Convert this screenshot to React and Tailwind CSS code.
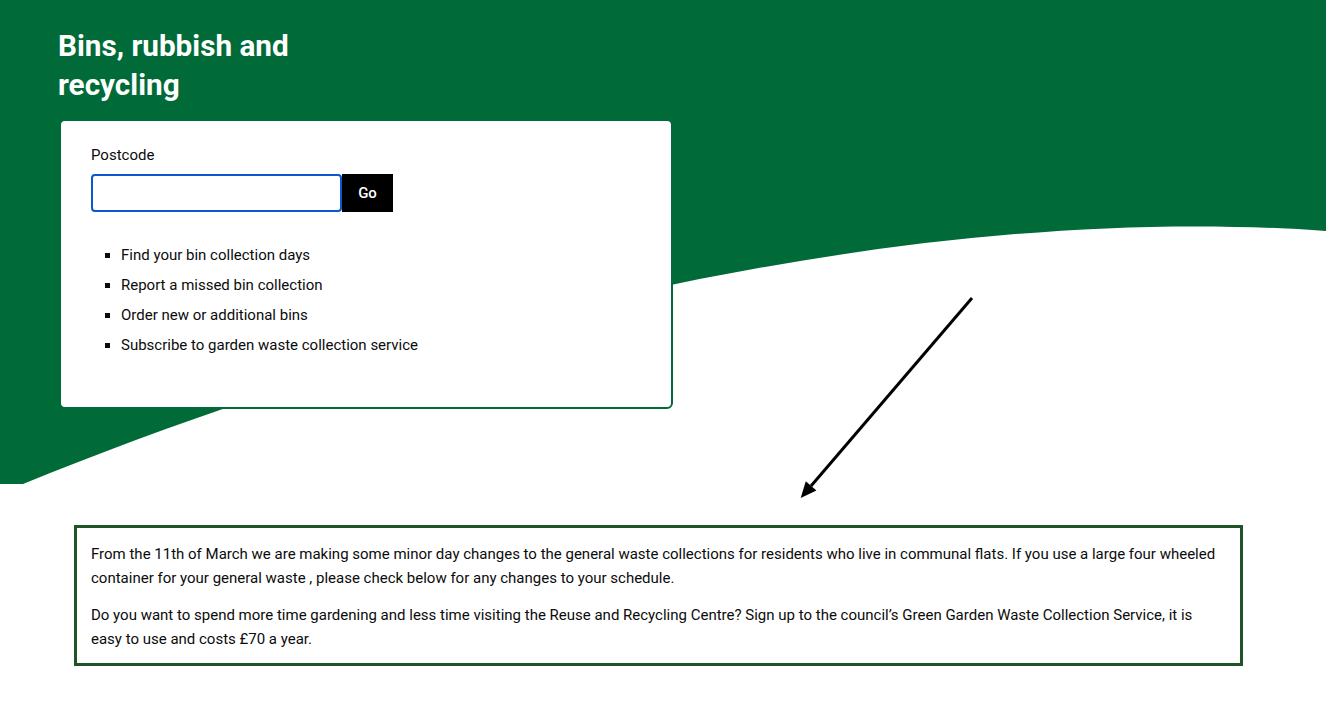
import React from "react";

const links = [
  "Find your bin collection days",
  "Report a missed bin collection",
  "Order new or additional bins",
  "Subscribe to garden waste collection service",
];

const Wave = () => (
  <svg
    className="absolute top-0 left-0 w-full h-[485px]"
    viewBox="0 0 1326 485"
    preserveAspectRatio="none"
    aria-hidden="true"
  >
    <path d="M0 0 H1326 V231 C900 200 400 330 23 484 H0 Z" fill="#006b38" />
  </svg>
);

const Arrow = () => (
  <svg
    className="absolute left-[790px] top-[290px] w-[190px] h-[215px]"
    viewBox="0 0 190 215"
    aria-hidden="true"
  >
    <line x1="182" y1="8" x2="21" y2="196" stroke="#000" strokeWidth="3" />
    <polygon points="10.7,208 26.4,200.4 15.8,191.2" fill="#000" />
  </svg>
);

export default function App() {
  return (
    <div className="relative min-h-[725px] bg-white font-['Roboto','Liberation_Sans',sans-serif] text-[#0b0c0c]">
      <Wave />
      <Arrow />

      <div className="relative">
        {/* Page heading */}
        <h1 className="pl-[58px] pt-[26px] w-[340px] text-[29.7px] leading-[39px] font-bold text-white">
          Bins, rubbish and recycling
        </h1>

        {/* Postcode search card */}
        <div className="ml-[59px] mt-[15px] w-[614px] h-[290px] bg-white border-2 border-[#006b38] rounded-[6px] pl-[30px] pt-[24px]">
          <label htmlFor="postcode" className="block text-[15px] leading-5 mb-[9px]">
            Postcode
          </label>
          <div className="flex">
            <input
              id="postcode"
              type="text"
              className="w-[251px] h-[38px] border-2 border-[#0b57d0] rounded-[4px] px-2 text-[15px] outline-none"
            />
            <button className="w-[51px] h-[38px] bg-black text-white text-[15px] font-medium">
              Go
            </button>
          </div>

          <ul className="mt-[33px] pl-[30px] list-[square] text-[15px] leading-5">
            {links.map((item) => (
              <li key={item} className="mb-[10px]">
                {item}
              </li>
            ))}
          </ul>
        </div>

        {/* Notice box */}
        <div className="ml-[74px] mt-[116px] w-[1169px] border-[3px] border-[#1e5428] px-[14px] pt-[14px] pb-[12px] text-[15px] leading-6">
          <p className="mb-[13px]">
            From the 11th of March we are making some minor day changes to the general waste collections for residents who live in communal flats. If you use a large four wheeled container for your general waste , please check below for any changes to your schedule.
          </p>
          <p>
            Do you want to spend more time gardening and less time visiting the Reuse and Recycling Centre? Sign up to the council’s Green Garden Waste Collection Service, it is easy to use and costs £70 a year.
          </p>
        </div>
      </div>
    </div>
  );
}
